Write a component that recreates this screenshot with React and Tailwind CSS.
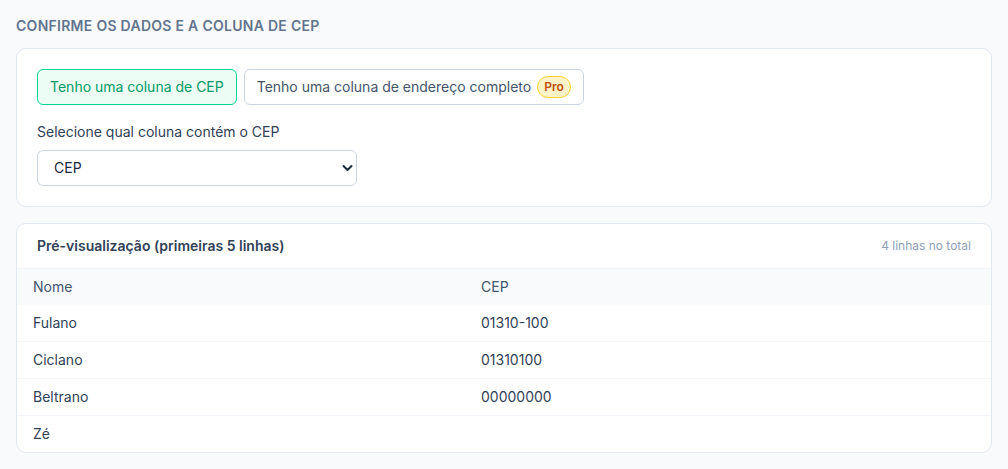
import React, { useState } from 'react';

// ==========================================
// Preview data
// ==========================================
const rows = [
  { nome: 'Fulano', cep: '01310-100' },
  { nome: 'Ciclano', cep: '01310100' },
  { nome: 'Beltrano', cep: '00000000' },
  { nome: 'Zé', cep: '' },
];

function ModeButton({ active, children, onClick }) {
  return (
    <button
      onClick={onClick}
      className={
        active
          ? 'flex h-9 items-center gap-1.5 rounded-md border border-emerald-400 bg-emerald-50 px-3 text-sm text-emerald-600'
          : 'flex h-9 items-center gap-1.5 rounded-md border border-slate-300 bg-white px-3 text-sm text-slate-600'
      }
    >
      {children}
    </button>
  );
}

export default function App() {
  const [mode, setMode] = useState('cep');

  return (
    <div className="min-h-screen bg-slate-50 px-4 pt-4 pb-4 font-['Inter',sans-serif] text-slate-700">
      <h2 className="mb-3 text-sm leading-5 font-semibold uppercase tracking-[0.02em] text-slate-500">
        Confirme os dados e a coluna de CEP
      </h2>

      {/* --- Mode + column select --- */}
      <div className="rounded-[10px] border border-slate-200 bg-white p-5">
        <div className="flex gap-[7px]">
          <ModeButton active={mode === 'cep'} onClick={() => setMode('cep')}>
            Tenho uma coluna de CEP
          </ModeButton>
          <ModeButton active={mode === 'endereco'} onClick={() => setMode('endereco')}>
            Tenho uma coluna de endereço completo
            <span className="rounded-full border border-amber-300 bg-amber-100 px-1.5 text-xs leading-5 font-semibold text-amber-700">
              Pro
            </span>
          </ModeButton>
        </div>

        <label className="mt-[17px] mb-2 block text-sm leading-5 text-slate-700">
          Selecione qual coluna contém o CEP
        </label>
        <div className="relative w-80">
          <select className="h-9 w-full appearance-none rounded-md border border-slate-300 bg-white px-4 text-sm text-slate-800 outline-none">
            <option>CEP</option>
            <option>Nome</option>
          </select>
          <svg
            className="pointer-events-none absolute top-1/2 right-1 h-[7px] w-[11px] -translate-y-1/2 text-slate-800"
            viewBox="0 0 11 7"
            fill="none"
            stroke="currentColor"
            strokeWidth="2"
            strokeLinecap="round"
            strokeLinejoin="round"
          >
            <path d="M1.5 1.5 5.5 5.5 9.5 1.5" />
          </svg>
        </div>
      </div>

      {/* --- Preview table --- */}
      <div className="mt-4 overflow-hidden rounded-[10px] border border-slate-200 bg-white">
        <div className="flex items-center justify-between border-b border-slate-100 px-5 py-3">
          <span className="text-sm leading-5 font-semibold text-slate-700">
            Pré-visualização (primeiras 5 linhas)
          </span>
          <span className="text-xs text-slate-400">4 linhas no total</span>
        </div>
        <div className="grid grid-cols-[448px_1fr] bg-slate-50 px-4 py-2 text-sm leading-5 text-slate-600">
          <span>Nome</span>
          <span>CEP</span>
        </div>
        {rows.map((r, i) => (
          <div
            key={r.nome}
            className={
              i === 0
                ? 'grid grid-cols-[448px_1fr] px-4 py-2 text-sm leading-5 text-slate-700'
                : 'grid grid-cols-[448px_1fr] border-t border-slate-100 px-4 py-2 text-sm leading-5 text-slate-700'
            }
          >
            <span>{r.nome}</span>
            <span>{r.cep}</span>
          </div>
        ))}
      </div>
    </div>
  );
}
